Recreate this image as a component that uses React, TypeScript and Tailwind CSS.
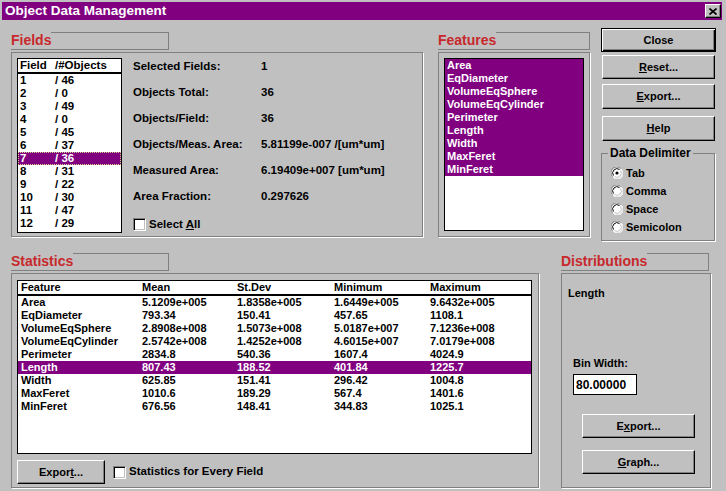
const fields: [number, number][] = [
  [1, 46], [2, 0], [3, 49], [4, 0], [5, 45], [6, 37],
  [7, 36], [8, 31], [9, 22], [10, 30], [11, 47], [12, 29],
];

const features = [
  "Area", "EqDiameter", "VolumeEqSphere", "VolumeEqCylinder", "Perimeter",
  "Length", "Width", "MaxFeret", "MinFeret",
];

const stats: string[][] = [
  ["Area", "5.1209e+005", "1.8358e+005", "1.6449e+005", "9.6432e+005"],
  ["EqDiameter", "793.34", "150.41", "457.65", "1108.1"],
  ["VolumeEqSphere", "2.8908e+008", "1.5073e+008", "5.0187e+007", "7.1236e+008"],
  ["VolumeEqCylinder", "2.5742e+008", "1.4252e+008", "4.6015e+007", "7.0179e+008"],
  ["Perimeter", "2834.8", "540.36", "1607.4", "4024.9"],
  ["Length", "807.43", "188.52", "401.84", "1225.7"],
  ["Width", "625.85", "151.41", "296.42", "1004.8"],
  ["MaxFeret", "1010.6", "189.29", "567.4", "1401.6"],
  ["MinFeret", "676.56", "148.41", "344.83", "1025.1"],
];

const info = [
  ["Selected Fields:", "1"],
  ["Objects Total:", "36"],
  ["Objects/Field:", "36"],
  ["Objects/Meas. Area:", "5.81199e-007 /[um*um]"],
  ["Measured Area:", "6.19409e+007 [um*um]"],
  ["Area Fraction:", "0.297626"],
];

const btn =
  "bg-[#c0c0c0] border border-t-white border-l-white border-b-black border-r-black shadow-[inset_-1px_-1px_0_#808080] flex items-center justify-center text-[11px] font-bold text-black leading-none";

function LabelBox({ title, width }: { title: string; width: string }) {
  return (
    <div className={`flex h-[18px] border-b border-r border-[#808080] ${width}`}>
      <span className="text-[14px] leading-[16px] font-bold text-[#c8282c]">{title}</span>
      <div className="flex-1 border-t border-[#808080]" />
    </div>
  );
}

function Checkbox() {
  return (
    <div className="w-[13px] h-[13px] bg-white border border-t-[#808080] border-l-[#808080] border-b-white border-r-white shadow-[inset_1px_1px_0_#000,inset_-1px_-1px_0_#c0c0c0]" />
  );
}

function Radio({ checked }: { checked?: boolean }) {
  return (
    <svg width="12" height="12" viewBox="0 0 12 12">
      <circle cx="6" cy="6" r="5.5" fill="white" />
      <path d="M1.5 9.5 A5.5 5.5 0 0 1 9.5 1.5" fill="none" stroke="#808080" strokeWidth="1" />
      <path d="M2.5 8.5 A4.3 4.3 0 0 1 8.5 2.5" fill="none" stroke="#000" strokeWidth="1" />
      <path d="M10.5 2.5 A5.5 5.5 0 0 1 2.5 10.5" fill="none" stroke="#fff" strokeWidth="1" />
      <path d="M9.5 3.5 A4.3 4.3 0 0 1 3.5 9.5" fill="none" stroke="#c0c0c0" strokeWidth="1" />
      {checked && <circle cx="6" cy="6" r="1.6" fill="#000" />}
    </svg>
  );
}

export default function App() {
  return (
    <div className="w-[726px] h-[491px] bg-[#c0c0c0] pt-[2px] pl-[2px] overflow-hidden font-[family-name:'Liberation_Sans',Arial,sans-serif] text-black">
      {/* title bar */}
      <div className="w-[720px] h-[18px] bg-[#800080] flex items-center justify-between pl-[3px] pr-[1px]">
        <span className="text-white text-[13.5px] font-bold leading-none">Object Data Management</span>
        <div className="w-[16px] h-[14px] bg-[#c0c0c0] border border-t-white border-l-white border-b-black border-r-black shadow-[inset_-1px_-1px_0_#808080] flex items-center justify-center">
          <svg width="8" height="7" viewBox="0 0 8 7">
            <path d="M0.5 0.5 L7.5 6.5 M7.5 0.5 L0.5 6.5" stroke="#000" strokeWidth="1.6" />
          </svg>
        </div>
      </div>

      <div className="pl-[9px]">
        {/* top row */}
        <div className="flex mt-[8px] h-[214px]">
          {/* Fields */}
          <div className="w-[412px]">
            <div className="mt-[4px]">
              <LabelBox title="Fields" width="w-[158px]" />
            </div>
            <div className="mt-[2px] h-[185px] border border-[#808080] shadow-[1px_1px_0_#fff] pl-[5px] pt-[5px] flex">
              <div className="w-[105px] h-[175px] bg-white border border-black text-[11.5px] font-bold leading-[13px]">
                <div className="flex h-[13px] pl-[2px]">
                  <span className="w-[35px]">Field</span>
                  <span>/#Objects</span>
                </div>
                <div className="h-[2px] bg-black" />
                {fields.map(([f, n]) => (
                  <div
                    key={f}
                    className={
                      f === 7
                        ? "flex h-[13px] pl-[1px] bg-[#800080] text-white border border-dotted border-[#d8d890] leading-[11px]"
                        : "flex h-[13px] pl-[2px]"
                    }
                  >
                    <span className="w-[35px]">{f}</span>
                    <span>/ {n}</span>
                  </div>
                ))}
              </div>
              <div className="ml-[11px] pt-[1px] text-[11.5px] font-bold">
                {info.map(([k, v]) => (
                  <div key={k} className="grid grid-cols-[128px_auto] h-[26px] leading-[14px]">
                    <span>{k}</span>
                    <span>{v}</span>
                  </div>
                ))}
                <div className="flex items-center gap-[3px] mt-[2px]">
                  <Checkbox />
                  <span className="leading-[14px]">
                    Select <u>A</u>ll
                  </span>
                </div>
              </div>
            </div>
          </div>

          {/* Features */}
          <div className="ml-[15px] w-[152px]">
            <div className="mt-[4px]">
              <LabelBox title="Features" width="w-[152px]" />
            </div>
            <div className="mt-[2px] h-[185px] border border-[#808080] shadow-[1px_1px_0_#fff] pl-[5px] pt-[5px]">
              <div className="w-[140px] h-[173px] bg-white border border-black text-[11px] font-bold leading-[13px]">
                {features.map((f) => (
                  <div key={f} className="h-[13px] bg-[#800080] text-white pl-[2px]">
                    {f}
                  </div>
                ))}
              </div>
            </div>
          </div>

          {/* buttons */}
          <div className="ml-[11px] w-[115px] flex flex-col">
            <div className="h-[24px] w-[115px] bg-[#c0c0c0] border border-black shadow-[inset_1px_1px_0_#fff,inset_-1px_-1px_0_#000,inset_-2px_-2px_0_#808080] flex items-center justify-center text-[11px] font-bold leading-none">
              Close
            </div>
            <div className={`${btn} h-[24px] w-[113px] ml-[1px] mt-[3px]`}>
              <span>
                <u>R</u>eset...
              </span>
            </div>
            <div className={`${btn} h-[25px] w-[113px] ml-[1px] mt-[5px]`}>
              <span>
                <u>E</u>xport...
              </span>
            </div>
            <div className={`${btn} h-[25px] w-[113px] ml-[1px] mt-[7px]`}>
              <span>
                <u>H</u>elp
              </span>
            </div>
            <fieldset className="mt-[6px] w-[114px] border border-[#808080] shadow-[1px_1px_0_#fff] pb-[4px]">
              <legend className="ml-[6px] px-[2px] text-[12px] font-bold leading-[13px]">Data Delimiter</legend>
              <div className="pt-[4px] pl-[9px] text-[11px] font-bold">
                {["Tab", "Comma", "Space", "Semicolon"].map((d, i) => (
                  <div key={d} className="flex items-center h-[18px] gap-[3px]">
                    <Radio checked={i === 0} />
                    <span>{d}</span>
                  </div>
                ))}
              </div>
            </fieldset>
          </div>
        </div>

        {/* bottom row */}
        <div className="flex mt-[11px]">
          {/* Statistics */}
          <div className="w-[528px]">
            <LabelBox title="Statistics" width="w-[158px]" />
            <div className="mt-[2px] h-[215px] border border-[#808080] shadow-[1px_1px_0_#fff] pl-[5px] pt-[6px]">
              <div className="w-[515px] h-[174px] bg-white border border-black text-[11px] font-bold leading-[13px]">
                <div className="grid grid-cols-[121px_95px_97px_96px_1fr] h-[13px] pl-[3px]">
                  <span>Feature</span>
                  <span>Mean</span>
                  <span>St.Dev</span>
                  <span>Minimum</span>
                  <span>Maximum</span>
                </div>
                <div className="h-[2px] bg-black" />
                {stats.map((r) => (
                  <div
                    key={r[0]}
                    className={`grid grid-cols-[121px_95px_97px_96px_1fr] h-[13px] pl-[3px] ${
                      r[0] === "Length" ? "bg-[#800080] text-white" : ""
                    }`}
                  >
                    {r.map((c, i) => (
                      <span key={i}>{c}</span>
                    ))}
                  </div>
                ))}
              </div>
              <div className="flex items-center mt-[6px]">
                <div className={`${btn} h-[24px] w-[88px]`}>
                  <span>
                    Expor<u>t</u>...
                  </span>
                </div>
                <div className="ml-[8px] flex items-center gap-[3px] text-[11.5px] font-bold">
                  <Checkbox />
                  <span>Statistics for Every Field</span>
                </div>
              </div>
            </div>
          </div>

          {/* Distributions */}
          <div className="ml-[22px] w-[150px]">
            <LabelBox title="Distributions" width="w-[148px]" />
            <div className="mt-[2px] h-[215px] border border-[#808080] shadow-[1px_1px_0_#fff] pt-[13px] text-[11px] font-bold">
              <div className="pl-[6px] leading-[13px]">Length</div>
              <div className="pl-[11px] mt-[57px] leading-[13px]">Bin Width:</div>
              <div className="ml-[11px] mt-[4px] w-[64px] h-[21px] bg-white border border-black flex items-center pl-[2px] text-[12px]">
                80.00000
              </div>
              <div className={`${btn} ml-[20px] mt-[19px] h-[24px] w-[113px]`}>
                <span>
                  E<u>x</u>port...
                </span>
              </div>
              <div className={`${btn} ml-[20px] mt-[12px] h-[24px] w-[113px]`}>
                <span>
                  <u>G</u>raph...
                </span>
              </div>
            </div>
          </div>
        </div>
      </div>
    </div>
  );
}
